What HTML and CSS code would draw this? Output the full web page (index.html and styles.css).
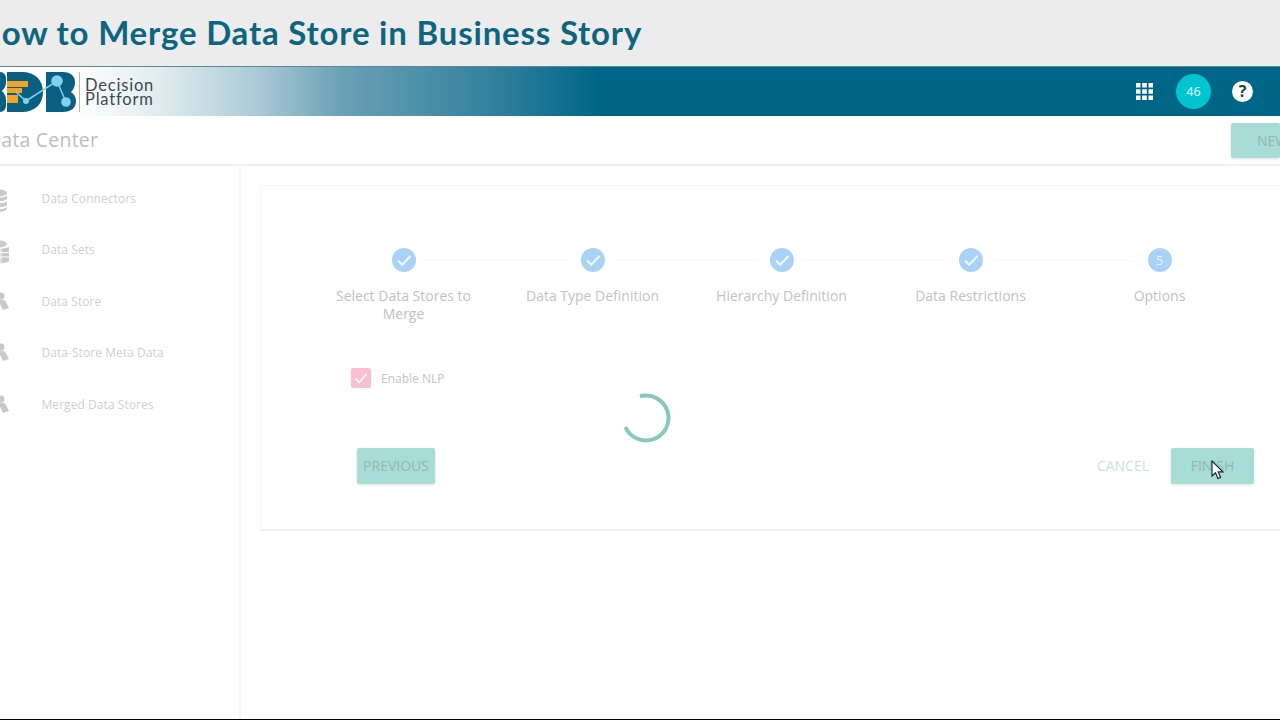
FILE: index.html
```html
<!DOCTYPE html>
<html lang="en">
<head>
<meta charset="utf-8">
<title>How to Merge Data Store in Business Story</title>
<link rel="stylesheet" href="styles.css">
</head>
<body>
<div class="video">
  <header class="title-bar"><h1 class="title">How to Merge Data Store in Business Story</h1></header>
  <div class="brand-bar">
    <div class="brand">
      <svg class="logo" viewBox="0 0 79 48" aria-hidden="true">
        <path fill="#0b5f80" d="M-10 4h10c4 0 6 3 6 7v4c0 3-2 6-4 8 2 2 4 5 4 8v6c0 4-2 7-6 7h-10z"/>
        <path fill="#0b5f80" d="M7 4h15c13 0 21 8 21 20s-8 20-21 20H7z"/>
        <path fill="#0b5f80" d="M46 4h17c8 0 12 4 12 11 0 4-2 7-4 9 3 2 5 5 5 9 0 7-5 11-13 11H46z"/>
        <rect fill="#f0a42a" x="7" y="13" width="21" height="6"/>
        <rect fill="#f0a42a" x="7" y="20" width="15" height="5"/>
        <rect fill="#f0a42a" x="7" y="27" width="11" height="8"/>
        <path fill="none" stroke="#7fd3ef" stroke-width="1.500" d="M16 24l10 9 31-20 9 21"/>
        <circle cx="26" cy="33" r="3" fill="#7fd3ef"/>
        <circle cx="57" cy="13" r="5.800" fill="#7fd3ef"/>
        <circle cx="66" cy="34" r="4.800" fill="#7fd3ef"/>
      </svg>
      <div class="brand-name"><span>Decision</span><span>Platform</span></div>
    </div>
    <div class="bar-actions">
      <svg class="apps" viewBox="0 0 17 17" aria-hidden="true"><path fill="#fff" d="M0 0h4.500v4.500H0zM6.200 0h4.600v4.500H6.200zM12.500 0H17v4.500h-4.500zM0 6.200h4.500v4.600H0zM6.200 6.200h4.600v4.600H6.200zM12.500 6.200H17v4.600h-4.500zM0 12.500h4.500V17H0zM6.200 12.500h4.600V17H6.200zM12.500 12.500H17V17h-4.500z"/></svg>
      <span class="avatar">46</span>
      <span class="help">?</span>
    </div>
  </div>
  <div class="page-head">
    <h2 class="page-title">Data Center</h2>
    <button class="btn btn-new" type="button">NEW</button>
  </div>
  <div class="content">
    <aside class="side">
      <ul class="menu">
        <li class="menu-item">
          <svg class="menu-icon" viewBox="0 0 22 24" aria-hidden="true"><ellipse cx="11" cy="4" rx="9" ry="3.500"/><path d="M2 6.500c2 3 16 3 18 0V10c-2 3-16 3-18 0zM2 12c2 3 16 3 18 0v4c-2 3-16 3-18 0zM2 18c2 3 16 3 18 0v2c-2 4-16 4-18 0z"/></svg>
          <span>Data Connectors</span>
        </li>
        <li class="menu-item">
          <svg class="menu-icon" viewBox="0 0 22 24" aria-hidden="true"><ellipse cx="11" cy="4" rx="9" ry="3.500"/><path d="M2 6.500c2 3 18 3 20 0V21c-2 3-18 3-20 0z"/><path class="menu-icon-grid" d="M2 12.500h20M2 17h20M14 9v14"/></svg>
          <span>Data Sets</span>
        </li>
        <li class="menu-item">
          <svg class="menu-icon" viewBox="0 0 22 24" aria-hidden="true"><circle cx="14" cy="4" r="3.500"/><path d="M9 9c3-2 8-2 10 1l3 6-6 2-3-6z"/><circle cx="8" cy="9" r="3"/><path d="M2 15c2-2 6-2 8 0l2 5c-3 3-8 3-10 1z"/></svg>
          <span>Data Store</span>
        </li>
        <li class="menu-item">
          <svg class="menu-icon" viewBox="0 0 22 24" aria-hidden="true"><circle cx="14" cy="4" r="3.500"/><path d="M9 9c3-2 8-2 10 1l3 6-6 2-3-6z"/><circle cx="8" cy="9" r="3"/><path d="M2 15c2-2 6-2 8 0l2 5c-3 3-8 3-10 1z"/></svg>
          <span>Data-Store Meta Data</span>
        </li>
        <li class="menu-item">
          <svg class="menu-icon" viewBox="0 0 22 24" aria-hidden="true"><circle cx="14" cy="4" r="3.500"/><path d="M9 9c3-2 8-2 10 1l3 6-6 2-3-6z"/><circle cx="8" cy="9" r="3"/><path d="M2 15c2-2 6-2 8 0l2 5c-3 3-8 3-10 1z"/></svg>
          <span>Merged Data Stores</span>
        </li>
      </ul>
    </aside>
    <main class="main">
      <section class="card">
        <ol class="stepper">
          <li class="step">
            <span class="step-dot"><svg viewBox="0 0 24 24" aria-hidden="true"><path d="M6 12.500l4.200 4.200L18.500 8"/></svg></span>
            <span class="step-label">Select Data Stores to Merge</span>
          </li>
          <li class="step">
            <span class="step-dot"><svg viewBox="0 0 24 24" aria-hidden="true"><path d="M6 12.500l4.200 4.200L18.500 8"/></svg></span>
            <span class="step-label">Data Type Definition</span>
          </li>
          <li class="step">
            <span class="step-dot"><svg viewBox="0 0 24 24" aria-hidden="true"><path d="M6 12.500l4.200 4.200L18.500 8"/></svg></span>
            <span class="step-label">Hierarchy Definition</span>
          </li>
          <li class="step">
            <span class="step-dot"><svg viewBox="0 0 24 24" aria-hidden="true"><path d="M6 12.500l4.200 4.200L18.500 8"/></svg></span>
            <span class="step-label">Data Restrictions</span>
          </li>
          <li class="step step-last">
            <span class="step-dot">5</span>
            <span class="step-label">Options</span>
          </li>
        </ol>
        <div class="nlp">
          <span class="check"><svg viewBox="0 0 20 20" aria-hidden="true"><path d="M4.500 10.500l3.800 3.800L15.500 6"/></svg></span>
          <span class="nlp-label">Enable NLP</span>
        </div>
        <div class="actions">
          <button class="btn btn-prev" type="button">PREVIOUS</button>
          <div class="actions-right">
            <button class="btn-text" type="button">CANCEL</button>
            <button class="btn btn-finish" type="button">FINISH</button>
          </div>
        </div>
        <svg class="spinner" viewBox="0 0 50 50" aria-hidden="true"><path d="M19 3.300A22.500 22.500 0 1 1 4.400 34"/></svg>
        <svg class="cursor" viewBox="0 0 14 20" aria-hidden="true"><path d="M1 1v15l3.500-3.300L7 18.500l2.600-1.100-2.400-5.500H12z"/></svg>
      </section>
    </main>
  </div>
</div>
</body>
</html>
```
FILE: styles.css
```css
* { box-sizing: border-box; }
html, body { margin: 0; padding: 0; }
body { width: 1280px; height: 720px; overflow: hidden; background: #fff; font-family: "Open Sans", "Liberation Sans", sans-serif; }
.video { width: 1280px; height: 720px; overflow: hidden; display: flex; flex-direction: column; border-bottom: 1px solid #000; }
.title-bar { height: 66px; flex: none; background: #ececec; display: flex; align-items: center; overflow: hidden; padding-bottom: 2px; }
.title { margin: 0 0 0 -24px; font-family: Lato, "Liberation Sans", sans-serif; font-weight: 700; font-size: 33px; letter-spacing: 0.8px; color: #0e6580; white-space: nowrap; }
.brand-bar { height: 50px; flex: none; display: flex; align-items: center; justify-content: space-between; background: linear-gradient(90deg, #fff 0, #fff 75px, #e0ecef 160px, #a9c9d4 260px, #6ba1b6 340px, #2f7f9c 500px, #006687 600px, #006687 100%); border-top: 1px solid #5b8797; }
.brand { display: flex; align-items: center; height: 100%; }
.logo { width: 79px; height: 48px; flex: none; }
.brand-name { display: flex; flex-direction: column; padding-left: 5px; border-left: 1px solid #c9b78a; height: 40px; justify-content: center; font-family: Lato, "Liberation Sans", sans-serif; font-size: 16.500px; line-height: 14px; color: #3c4a50; letter-spacing: 0.8px; }
.bar-actions { display: flex; align-items: center; margin-right: 27px; padding-bottom: 1px; }
.apps { width: 17px; height: 17px; }
.avatar { width: 35px; height: 35px; margin-left: 23px; border-radius: 50%; background: #00c4cf; color: #e6fbfc; font-size: 12.500px; display: flex; align-items: center; justify-content: center; }
.help { width: 21px; height: 21px; margin-left: 21px; border-radius: 50%; background: #fff; color: #1c3f4f; font-size: 16px; font-weight: 700; display: flex; align-items: center; justify-content: center; }
.page-head { height: 50px; flex: none; display: flex; align-items: center; justify-content: space-between; border-bottom: 2px solid #f0f0f0; overflow: hidden; }
.page-title { margin: 0 0 1px -13px; font-weight: 400; font-size: 19.500px; color: #bdbdbd; letter-spacing: 0.2px; white-space: nowrap; }
.btn { border: 0; border-radius: 2px; background: #a8dcd6; color: #8fbab8; font-family: inherit; font-size: 14px; box-shadow: 0 1px 3px rgba(0,0,0,.12); }
.btn-new { width: 49px; height: 35px; flex: none; margin-top: 1px; padding: 0 0 0 26px; text-align: left; white-space: nowrap; overflow: hidden; }
.content { flex: 1; display: flex; min-height: 0; }
.side { width: 241px; flex: none; border-right: 2px solid #f7f7f7; }
.menu { list-style: none; margin: 0; padding: 6.700px 0 0; }
.menu-item { height: 51.500px; display: flex; align-items: center; font-size: 12px; color: #cfcfcf; letter-spacing: 0.06px; }
.menu-icon { width: 22px; height: 24px; flex: none; margin: 5px 32.500px 0 -13px; fill: #c9c9c9; }
.menu-icon-grid { fill: none; stroke: #fff; stroke-width: 1; }
.main { flex: 1; padding: 19px 0 0 19px; min-width: 0; }
.card { position: relative; width: 1030px; height: 346px; background: #fff; border: 1px solid #f7f7f7; border-bottom: 2px solid #efefef; padding: 62px 0 0 0; }
.stepper { list-style: none; margin: 0; padding: 0 0 0 48px; display: grid; grid-template-columns: repeat(5, 189px); }
.step { position: relative; display: flex; flex-direction: column; align-items: center; text-align: center; }
.step:not(.step-last)::after { content: ""; position: absolute; left: calc(50% + 20px); top: 12px; width: 146px; height: 1px; background: #f8f8f8; }
.step-dot { width: 24px; height: 24px; border-radius: 50%; background: #a9d2f6; color: #eaf4fd; font-size: 12.500px; display: flex; align-items: center; justify-content: center; }
.step-dot svg { width: 24px; height: 24px; fill: none; stroke: #f0f8ff; stroke-width: 2; }
.step-label { width: 150px; margin-top: 15px; font-size: 14px; line-height: 18px; color: #c2c2c2; }
.nlp { display: flex; align-items: center; margin: 45px 0 0 90px; }
.check { width: 20px; height: 20px; border-radius: 2px; background: #fbbfd2; display: flex; }
.check svg { width: 20px; height: 20px; fill: none; stroke: #fff; stroke-width: 1.500; }
.nlp-label { margin-left: 10px; font-size: 12px; color: #c4c4c4; }
.actions { display: flex; justify-content: space-between; align-items: center; margin: 60px 35px 0 96px; }
.actions-right { display: flex; align-items: center; gap: 22px; }
.btn-prev { width: 78px; height: 36px; padding: 0 0 2px; }
.btn-finish { width: 83px; height: 36px; padding: 0 0 2px; }
.btn-text { border: 0; background: none; padding: 0 0 2px; font-family: inherit; font-size: 14px; color: #d2dcdc; }
.spinner { position: absolute; left: 360px; top: 207px; width: 50px; height: 50px; fill: none; stroke: #85c8bf; stroke-width: 4; }
.cursor { position: absolute; left: 950px; top: 274px; width: 14px; height: 20px; fill: #fff; stroke: #1b2b33; stroke-width: 1.200; }
```
